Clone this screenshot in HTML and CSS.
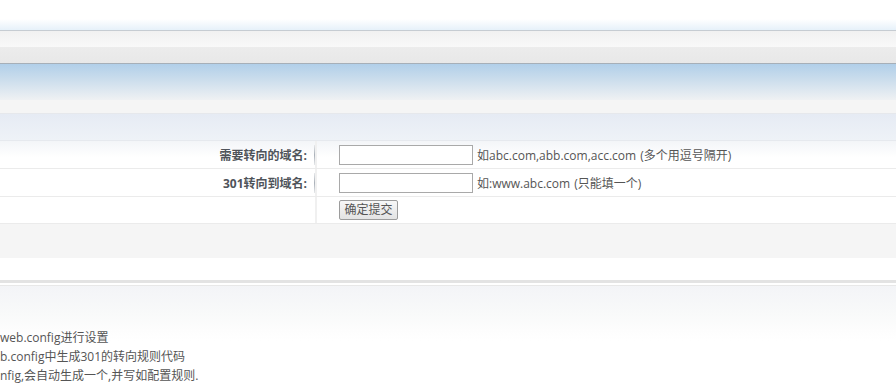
FILE: index.html
```html
<!DOCTYPE html>
<html lang="zh-CN">
<head>
<meta charset="utf-8">
<title>301转向设置</title>
<link rel="stylesheet" href="styles.css">
</head>
<body>
<div class="page">
  <div class="top"></div>
  <div class="top-fade"></div>
  <div class="menubar">
    <div class="menubar-upper"></div>
    <div class="menubar-lower"></div>
  </div>
  <div class="titlebar"></div>
  <div class="subbar"></div>
  <div class="panel-head"></div>
  <form class="form">
    <div class="row row-first">
      <div class="label"><span>需要转向的域名:</span></div>
      <div class="value">
        <input class="text-input" type="text">
        <span class="hint">如abc.com,abb.com,acc.com (多个用逗号隔开)</span>
      </div>
    </div>
    <div class="row">
      <div class="label"><span>301转向到域名:</span></div>
      <div class="value">
        <input class="text-input" type="text">
        <span class="hint">如:www.abc.com (只能填一个)</span>
      </div>
    </div>
    <div class="row row-last">
      <div class="label label-empty"></div>
      <div class="value">
        <button class="btn" type="button">确定提交</button>
      </div>
    </div>
  </form>
  <div class="gray-area"></div>
  <div class="spacer"></div>
  <div class="notes">
    <p>web.config进行设置</p>
    <p>b.config中生成301的转向规则代码</p>
    <p>nfig,会自动生成一个,并写如配置规则.</p>
  </div>
</div>
</body>
</html>
```

FILE: styles.css
```css
html, body {
  margin: 0;
  padding: 0;
  background: #fff;
}
body {
  font-family: "Open Sans", "Noto Sans CJK SC", sans-serif;
  font-size: 12px;
  color: #555;
  overflow: hidden;
}
.page {
  width: 896px;
}
.top {
  height: 19px;
  background: #fff;
}
.top-fade {
  height: 11px;
  background: linear-gradient(#ffffff, #e6f1fa);
}
.menubar {
  border-top: 1px solid #c6ccd2;
  border-bottom: 1px solid #a6afb8;
}
.menubar-upper {
  height: 16px;
  background: linear-gradient(#f1f1f1, #f9f9f9);
}
.menubar-lower {
  height: 16px;
  background: linear-gradient(#ececec, #e8e8e8);
}
.titlebar {
  height: 36px;
  background: linear-gradient(#b1cfe9, #c9dcec 40%, #eff1f3);
}
.subbar {
  height: 13px;
  background: #f5f5f5;
  border-bottom: 1px solid #e6e8ec;
}
.panel-head {
  height: 26px;
  background: linear-gradient(#e6ebf4, #eef2f7);
  border-bottom: 1px solid #e6e9ee;
}
.form {
  margin: 0;
}
.row {
  display: flex;
  height: 27px;
  border-bottom: 1px solid #ebebeb;
  background: #fff;
}
.row-first {
  background: linear-gradient(#f3f5f8, #ffffff 60%);
}
.row-last {
  height: 26px;
}
.label {
  width: 317px;
  display: flex;
  align-items: center;
  justify-content: flex-end;
  position: relative;
  border-right: 2px solid #f0f0f0;
  box-sizing: border-box;
}
.label span {
  font-weight: bold;
  color: #4f545a;
  padding-right: 8px;
}
.label::after {
  content: "";
  position: absolute;
  right: 0;
  top: 4px;
  bottom: 3px;
  width: 1px;
  background: linear-gradient(#e6e8ea, #a9b0b8 50%, #e6e8ea);
}
.label-empty::after {
  display: none;
}
.value {
  flex: 1;
  display: flex;
  align-items: center;
  padding-left: 22px;
}
.text-input {
  width: 134px;
  height: 20px;
  box-sizing: border-box;
  border: 1px solid #a9a9a9;
  background: #fff;
  margin: 0 4px 0 0;
  padding: 0 2px;
  font-family: inherit;
  font-size: 12px;
}
.hint {
  color: #555;
  word-spacing: 1px;
}
.btn {
  width: 59px;
  height: 20px;
  box-sizing: border-box;
  margin: 0;
  padding: 0;
  border: 1px solid #9c9c9c;
  border-radius: 2px;
  background: linear-gradient(#f7f7f7, #e3e3e3);
  font-family: inherit;
  font-size: 12px;
  color: #555;
  line-height: 18px;
}
.gray-area {
  height: 34px;
  background: #f5f5f5;
}
.spacer {
  height: 22px;
  background: #fff;
  border-bottom: 3px solid #e3e3e3;
}
.notes {
  border-top: 2px solid #fff;
  box-shadow: inset 0 1px 0 #e8e8e8;
  padding-top: 43px;
  background: linear-gradient(#f3f4f7, #f9fafa 30px, #fdfdfd 45px, #fff 56px);
}
.notes p {
  margin: 0;
  line-height: 19px;
  color: #555;
}
```
